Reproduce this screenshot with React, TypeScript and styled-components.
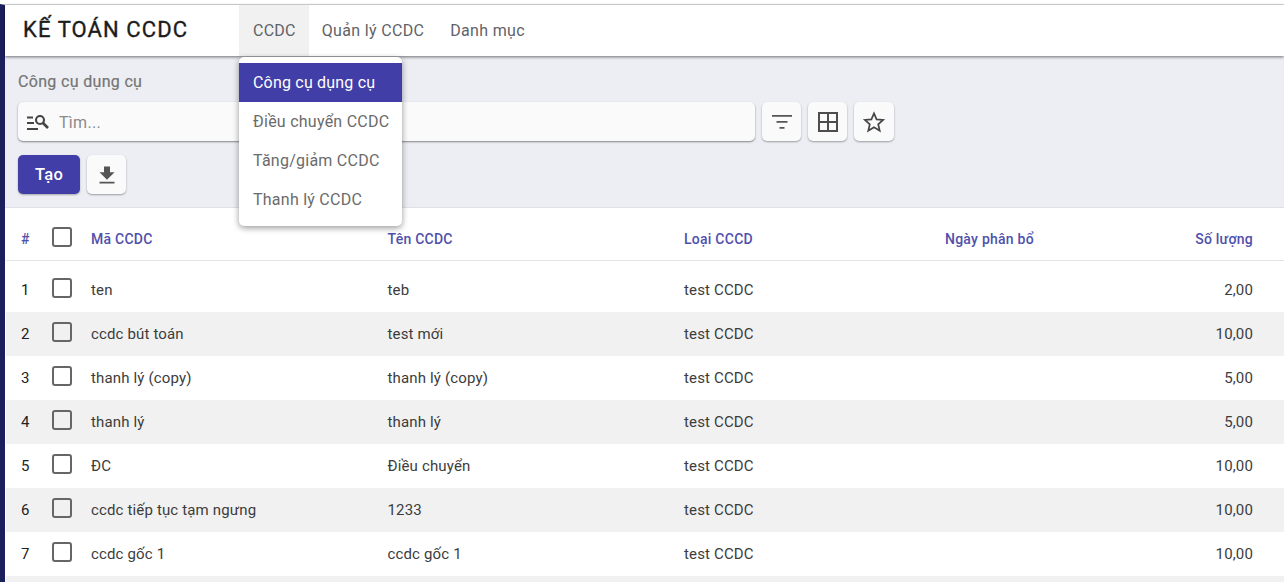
import React from "react";
import styled, { createGlobalStyle } from "styled-components";

const Global = createGlobalStyle`
  html, body { margin: 0; padding: 0; height: 582px; overflow: hidden; background: #fff; }
  body { font-family: Roboto, "Noto Sans", sans-serif; color: #333; }
  * { box-sizing: border-box; }
`;

const Page = styled.div`
  width: 1284px;
  height: 582px;
  overflow: hidden;
  padding-top: 4px;
  background: #fff;
  position: relative;
`;
const Shell = styled.div`
  height: 578px;
  border-top: 1px solid #dcdcdc;
  border-left: 5px solid #1b1f5c;
  display: flex;
  flex-direction: column;
`;
const Header = styled.header`
  height: 51px;
  flex: none;
  display: flex;
  background: #fff;
  box-shadow: 0 1px 3px rgba(0, 0, 0, 0.55);
  position: relative;
  z-index: 2;
`;
const Brand = styled.div`
  width: 234px;
  padding-left: 18px;
  font-size: 22px;
  font-weight: 400;
  letter-spacing: 1.1px;
  line-height: 49px;
  color: #1c1c1c;
  -webkit-text-stroke: 0.35px #1c1c1c;
`;
const NavItem = styled.div<{ $active?: boolean }>`
  padding: 0 13px 0 ${(p) => (p.$active ? 14 : 13)}px;
  font-size: 16px;
  letter-spacing: ${(p) => (p.$active ? "0.25px" : "0.33px")};
  line-height: 51px;
  color: #5f6368;
  background: ${(p) => (p.$active ? "#f1f1f1" : "transparent")};
`;
const Toolbar = styled.section`
  height: 152px;
  flex: none;
  background: #eceef3;
  padding: 16px 0 0 13px;
  border-bottom: 1px solid #dfe1e6;
`;
const Crumb = styled.div`
  font-size: 16px;
  font-weight: 400;
  letter-spacing: 0.33px;
  line-height: 20px;
  color: #757575;
  -webkit-text-stroke: 0.2px #757575;
`;
const SearchRow = styled.div`
  display: flex;
  gap: 7px;
  margin-top: 10px;
`;
const SearchBox = styled.div`
  width: 737px;
  height: 39px;
  display: flex;
  align-items: center;
  gap: 10px;
  padding: 1px 0 0 9px;
  background: #fafafa;
  border-radius: 5px;
  box-shadow: 0 1px 2px rgba(0, 0, 0, 0.45);
  font-size: 16px;
  letter-spacing: 0.3px;
  color: #8a8a8a;
`;
const IconButton = styled.button<{ $wide?: number }>`
  width: ${(p) => p.$wide ?? 39}px;
  height: 39px;
  padding: 0;
  border: 0;
  display: flex;
  align-items: center;
  justify-content: center;
  background: #fafafa;
  border-radius: 5px;
  box-shadow: 0 1px 2px rgba(0, 0, 0, 0.35);
`;
const ActionRow = styled.div`
  display: flex;
  gap: 7px;
  margin-top: 14px;
`;
const CreateButton = styled.button`
  width: 62px;
  height: 39px;
  border: 0;
  padding: 0;
  border-radius: 5px;
  background: #413ea7;
  color: #fff;
  font-family: inherit;
  font-size: 16.5px;
  font-weight: 500;
  letter-spacing: 0.3px;
  box-shadow: 0 1px 2px rgba(0, 0, 0, 0.3);
`;
const Table = styled.section`
  flex: 1;
  background: #fff;
  margin-left: 1px;
`;
const grid = `
  display: grid;
  grid-template-columns: 46px 39px 296.5px 296.5px 261px 1fr auto;
  align-items: center;
  padding-right: 31px;
`;
const HeadRow = styled.div`
  ${grid}
  height: 53px;
  border-bottom: 1px solid #e3e3e3;
  margin-bottom: 7px;
  font-size: 14px;
  font-weight: 500;
  letter-spacing: 0.25px;
  color: #5050ab;
  padding-top: 10px;
`;
const Row = styled.div<{ $striped: boolean }>`
  ${grid}
  height: 44px;
  font-size: 15px;
  letter-spacing: 0.15px;
  color: #3c3c3c;
  background: ${(p) => (p.$striped ? "#f1f1f1" : "#fff")};
`;
const IndexCell = styled.div<{ $head?: boolean }>`
  padding-left: 15px;
  font-weight: ${(p) => (p.$head ? 500 : 400)};
  color: ${(p) => (p.$head ? "#5050ab" : "#222")};
`;
const Right = styled.div`
  text-align: right;
`;
const Check = styled.span`
  display: block;
  width: 20px;
  height: 20px;
  margin-bottom: 4px;
  border: 2px solid #666;
  border-radius: 3px;
  background: transparent;
`;
const Menu = styled.nav`
  position: absolute;
  left: 239px;
  top: 57px;
  width: 163px;
  height: 169px;
  padding-top: 6px;
  background: #fff;
  border-radius: 5px;
  box-shadow: 0 2px 6px rgba(0, 0, 0, 0.4);
  z-index: 5;
`;
const MenuItem = styled.div<{ $active?: boolean }>`
  height: 39px;
  padding-left: 14px;
  font-size: 16px;
  letter-spacing: ${(p) => (p.$active ? "0.2px" : "0.25px")};
  line-height: 39px;
  white-space: nowrap;
  color: ${(p) => (p.$active ? "#fff" : "#6b6b6b")};
  background: ${(p) => (p.$active ? "#413ea7" : "transparent")};
`;

const rows = [
  ["ten", "teb", "test CCDC", "2,00"],
  ["ccdc bút toán", "test mới", "test CCDC", "10,00"],
  ["thanh lý (copy)", "thanh lý (copy)", "test CCDC", "5,00"],
  ["thanh lý", "thanh lý", "test CCDC", "5,00"],
  ["ĐC", "Điều chuyển", "test CCDC", "10,00"],
  ["ccdc tiếp tục tạm ngưng", "1233", "test CCDC", "10,00"],
  ["ccdc gốc 1", "ccdc gốc 1", "test CCDC", "10,00"],
];

const SearchIcon = () => (
  <svg width="22" height="15" viewBox="0 0 22 15" fill="none" stroke="#444" strokeWidth="1.8">
    <path d="M0 2.500h6M0 8h7M0 14h11" />
    <circle cx="13" cy="5" r="4" strokeWidth="2.100" />
    <path d="M16 8l5 5" strokeWidth="2.600" />
  </svg>
);
const FilterIcon = () => (
  <svg width="24" height="24" viewBox="0 0 24 24" fill="#555">
    <path d="M2 5h20v1.800H2zM6.500 11h11v1.800h-11zM9.500 17h5v1.800h-5z" />
  </svg>
);
const GridIcon = () => (
  <svg width="22" height="22" viewBox="0 0 22 22" fill="none" stroke="#4d4d4d" strokeWidth="2">
    <rect x="2" y="2" width="18" height="18" />
    <path d="M11 2v18M2 11h18" />
  </svg>
);
const StarIcon = () => (
  <svg width="24" height="24" viewBox="0 0 24 24" fill="none" stroke="#444" strokeWidth="1.700">
    <path d="M12 3.400l2.600 6 6.500.6-4.900 4.300 1.500 6.400L12 17.300l-5.700 3.400 1.500-6.400L2.900 10l6.500-.6z" />
  </svg>
);
const DownloadIcon = () => (
  <svg width="24" height="24" viewBox="0 0 24 24" fill="#555">
    <path d="M19.500 9.200h-4.500V3.500H9v5.700H4.500l7.500 7.500zM4.500 18.700h15v1.800h-15z" />
  </svg>
);

export default function App() {
  return (
    <Page>
      <Global />
      <Shell>
        <Header>
          <Brand>KẾ TOÁN CCDC</Brand>
          <NavItem $active>CCDC</NavItem>
          <NavItem>Quản lý CCDC</NavItem>
          <NavItem>Danh mục</NavItem>
        </Header>
        <Toolbar>
          <Crumb>Công cụ dụng cụ</Crumb>
          <SearchRow>
            <SearchBox>
              <SearchIcon />
              Tìm...
            </SearchBox>
            <IconButton>
              <FilterIcon />
            </IconButton>
            <IconButton>
              <GridIcon />
            </IconButton>
            <IconButton $wide={40}>
              <StarIcon />
            </IconButton>
          </SearchRow>
          <ActionRow>
            <CreateButton>Tạo</CreateButton>
            <IconButton>
              <DownloadIcon />
            </IconButton>
          </ActionRow>
        </Toolbar>
        <Table>
          <HeadRow>
            <IndexCell $head>#</IndexCell>
            <Check />
            <div>Mã CCDC</div>
            <div>Tên CCDC</div>
            <div>Loại CCCD</div>
            <div>Ngày phân bổ</div>
            <Right>Số lượng</Right>
          </HeadRow>
          {rows.map((r, i) => (
            <Row key={i} $striped={i % 2 === 1}>
              <IndexCell>{i + 1}</IndexCell>
              <Check />
              <div>{r[0]}</div>
              <div>{r[1]}</div>
              <div>{r[2]}</div>
              <div />
              <Right>{r[3]}</Right>
            </Row>
          ))}
          <Row $striped />
        </Table>
      </Shell>
      <Menu>
        <MenuItem $active>Công cụ dụng cụ</MenuItem>
        <MenuItem>Điều chuyển CCDC</MenuItem>
        <MenuItem>Tăng/giảm CCDC</MenuItem>
        <MenuItem>Thanh lý CCDC</MenuItem>
      </Menu>
    </Page>
  );
}
